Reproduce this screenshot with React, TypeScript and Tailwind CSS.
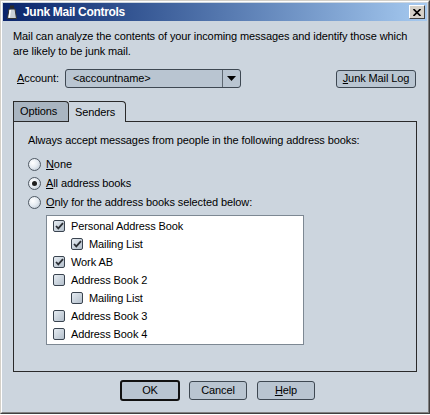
import React from "react";

const U = ({ children }: { children: React.ReactNode }) => (
  <span className="underline underline-offset-[1px]">{children}</span>
);

const Radio = ({ checked }: { checked?: boolean }) => (
  <span className="w-[13px] h-[13px] rounded-full border border-[#4f5964] bg-[radial-gradient(circle_at_35%_35%,#ffffff_0%,#e6ecf2_45%,#b4c0cc_100%)] flex items-center justify-center shrink-0">
    {checked && <span className="w-[5px] h-[5px] rounded-full bg-[#1e1e1e]" />}
  </span>
);

const Check = ({ checked }: { checked?: boolean }) => (
  <span className="w-[12px] h-[12px] rounded-[2px] border border-[#3a4450] bg-gradient-to-br from-[#e6ecf2] to-[#b3bfcb] flex items-center justify-center shrink-0">
    {checked && (
      <svg width="9" height="8" viewBox="0 0 9 8">
        <path d="M1 4 L3.3 6.4 L8 1.2" stroke="#2b2f35" strokeWidth="1.8" fill="none" />
      </svg>
    )}
  </span>
);

const Item = ({ label, checked, indent }: { label: string; checked?: boolean; indent?: boolean }) => (
  <div className={`h-[18px] flex items-center gap-[6px] ${indent ? "pl-[24px]" : "pl-[6px]"}`}>
    <Check checked={checked} />
    <span>{label}</span>
  </div>
);

export default function App() {
  return (
    <div className="w-[430px] h-[415px] bg-white font-['Liberation_Sans',sans-serif] text-[11px] tracking-[-0.1px] text-black leading-none">
      <div className="w-[430px] h-[414px] flex flex-col border-t border-l border-[#d4d0c8] border-r border-b border-r-[#404040] border-b-[#404040]">
        <div className="flex-1 flex flex-col bg-[#ccd5de] border-t border-l border-white border-r border-b border-r-[#808080] border-b-[#808080] p-px">
          {/* Title bar */}
          <div className="h-[18px] flex items-center bg-gradient-to-r from-[#0a246a] to-[#a6caf0] pl-[4px] pr-[2px]">
            <svg width="10" height="14" viewBox="0 0 10 14" className="shrink-0">
              <rect x="3" y="0.5" width="4" height="3" fill="#2a2a2a" />
              <path d="M2 4 L8 4 L9.5 13.5 L0.5 13.5 Z" fill="#c9cfd6" stroke="#333" strokeWidth="1" />
              <path d="M2.5 5 L4 5 L3 12.5 L1.5 12.5 Z" fill="#ffffff" />
            </svg>
            <span className="ml-[6px] text-white font-bold text-[12px] tracking-[-0.3px]">Junk Mail Controls</span>
            <div className="ml-auto w-[16px] h-[14px] bg-[#d4d0c8] border-t border-l border-white border-r border-b border-r-[#404040] border-b-[#404040] flex items-center justify-center">
              <svg width="8" height="7" viewBox="0 0 8 7">
                <path d="M0.5 0 L7.5 7 M7.5 0 L0.5 7" stroke="#000" strokeWidth="1.6" />
              </svg>
            </div>
          </div>

          {/* Body */}
          <div className="flex-1 flex flex-col pl-[10px] pr-[9px]">
            <p className="mt-[8px] leading-[15px]">
              Mail can analyze the contents of your incoming messages and identify those which
              <br />
              are likely to be junk mail.
            </p>

            <div className="mt-[10px] h-[19px] flex items-center">
              <span className="ml-[4px] w-[48px]">
                <U>A</U>ccount:
              </span>
              <div className="w-[176px] h-[19px] rounded-[3px] border border-[#3e4852] bg-[#b9c5d1] flex items-center">
                <span className="flex-1 pl-[7px]">&lt;accountname&gt;</span>
                <div className="w-[18px] h-full border-l border-[#5e6872] flex items-center justify-center">
                  <svg width="9" height="5" viewBox="0 0 9 5">
                    <path d="M0 0 L9 0 L4.5 5 Z" fill="#000" />
                  </svg>
                </div>
              </div>
              <div className="ml-auto mr-[2px] w-[80px] h-[18px] rounded-[3px] border border-[#3e4852] bg-[#b9c5d1] flex items-center justify-center">
                <span>
                  <U>J</U>unk Mail Log
                </span>
              </div>
            </div>

            {/* Tabs */}
            <div className="mt-[13px] h-[20px] flex items-end">
              <div className="w-[56px] h-[20px] bg-[#a9b5c1] border-t border-l border-r border-[#2a2a2a] rounded-tr-[4px] flex items-center pl-[6px]">
                Options
              </div>
              <div className="w-[57px] h-[21px] -mb-px relative z-10 bg-[#ccd5de] border-t border-r border-[#2a2a2a] rounded-tr-[4px] flex items-center pl-[6px]">
                Senders
              </div>
            </div>
            <div className="w-[404px] h-[251px] border border-[#2a2a2a] pl-[14px] pt-[12px]">
              <div className="leading-[13px]">Always accept messages from people in the following address books:</div>
              <div className="mt-[11px] flex flex-col gap-[6px]">
                <div className="h-[13px] flex items-center gap-[5px]">
                  <Radio />
                  <span>
                    <U>N</U>one
                  </span>
                </div>
                <div className="h-[13px] flex items-center gap-[5px]">
                  <Radio checked />
                  <span>
                    <U>A</U>ll address books
                  </span>
                </div>
                <div className="h-[13px] flex items-center gap-[5px]">
                  <Radio />
                  <span>
                    <U>O</U>nly for the address books selected below:
                  </span>
                </div>
              </div>
              <div className="mt-[6px] ml-[18px] w-[258px] h-[130px] bg-white border border-[#7d8893] py-px">
                <Item label="Personal Address Book" checked />
                <Item label="Mailing List" checked indent />
                <Item label="Work AB" checked />
                <Item label="Address Book 2" />
                <Item label="Mailing List" indent />
                <Item label="Address Book 3" />
                <Item label="Address Book 4" />
              </div>
            </div>

            {/* Buttons */}
            <div className="mt-[8px] flex items-center justify-center gap-[9px] pl-[4px]">
              <div className="w-[60px] h-[21px] rounded-[3px] border-2 border-[#111] bg-[#b9c5d1] flex items-center justify-center">
                OK
              </div>
              <div className="w-[58px] h-[19px] rounded-[3px] border border-[#3e4852] bg-[#b9c5d1] flex items-center justify-center">
                Cancel
              </div>
              <div className="ml-[1px] w-[58px] h-[19px] rounded-[3px] border border-[#3e4852] bg-[#b9c5d1] flex items-center justify-center">
                <span>
                  <U>H</U>elp
                </span>
              </div>
            </div>
          </div>
        </div>
      </div>
    </div>
  );
}
